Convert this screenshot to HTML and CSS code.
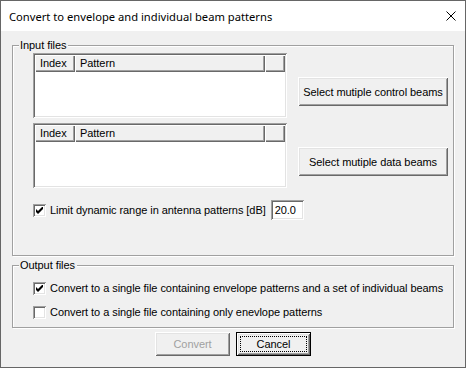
FILE: index.html
```html
<!DOCTYPE html>
<html lang="en">
<head>
    <meta charset="UTF-8" />
    <title>Convert to envelope and individual beam patterns</title>
    <link rel="stylesheet" href="styles.css">
</head>
<body>
    <div class="window">
        <div class="titlebar">
            <span class="title">Convert to envelope and individual beam patterns</span>
            <svg class="close" width="10" height="10" viewBox="0 0 10 10">
                <path d="M0.5 0.5 L9.5 9.5 M9.5 0.5 L0.5 9.5" stroke="#000" stroke-width="1" fill="none"/>
            </svg>
        </div>

        <div class="client">
            <div class="group group-input">
                <span class="group-label">Input files</span>

                <div class="list-row">
                    <div class="listview">
                        <div class="lv-header">
                            <span class="col col-index">Index</span>
                            <span class="col col-pattern">Pattern</span>
                            <span class="col col-fill"></span>
                        </div>
                    </div>
                    <button class="btn btn-select">Select mutiple control beams</button>
                </div>

                <div class="list-row second">
                    <div class="listview">
                        <div class="lv-header">
                            <span class="col col-index">Index</span>
                            <span class="col col-pattern">Pattern</span>
                            <span class="col col-fill"></span>
                        </div>
                    </div>
                    <button class="btn btn-select">Select mutiple data beams</button>
                </div>

                <div class="check-row range-row">
                    <span class="checkbox">
                        <svg width="7" height="7" viewBox="0 0 7 7"><path d="M0 2 L2 4 L7 -1 L7 2 L2 7 L0 5 Z" fill="#000"/></svg>
                    </span>
                    <span class="check-label">Limit dynamic range in antenna patterns [dB]</span>
                    <span class="textbox">20.0</span>
                </div>
            </div>

            <div class="group group-output">
                <span class="group-label">Output files</span>
                <div class="check-row">
                    <span class="checkbox">
                        <svg width="7" height="7" viewBox="0 0 7 7"><path d="M0 2 L2 4 L7 -1 L7 2 L2 7 L0 5 Z" fill="#000"/></svg>
                    </span>
                    <span class="check-label">Convert to a single file containing envelope patterns and a set of individual beams</span>
                </div>
                <div class="check-row">
                    <span class="checkbox"></span>
                    <span class="check-label">Convert to a single file containing only enevlope patterns</span>
                </div>
            </div>

            <div class="actions">
                <button class="btn btn-action" disabled>Convert</button>
                <button class="btn btn-action btn-default"><span class="focus">Cancel</span></button>
            </div>
        </div>
    </div>
</body>
</html>
```

FILE: styles.css
```css
:root {
    --face: #f0f0f0;
    --light: #e3e3e3;
    --shadow: #a0a0a0;
    --dark: #696969;
}
body {
    margin: 0;
    font-family: 'Liberation Sans', Arial, sans-serif;
    font-size: 11px;
    letter-spacing: -0.06px;
    color: #000;
}
.window {
    width: 466px;
    height: 368px;
    box-sizing: border-box;
    border: 1px solid #666;
    background: var(--face);
    display: flex;
    flex-direction: column;
}
.titlebar {
    height: 30px;
    background: #fff;
    display: flex;
    align-items: center;
    justify-content: space-between;
    padding: 0 9px 0 8px;
    flex-shrink: 0;
}
.title {
    font-family: 'Noto Sans', sans-serif;
    font-size: 11.2px;
    letter-spacing: 0;
    margin-top: 1px;
}
.close {
    display: block;
}
.client {
    padding: 14px 11px 0;
}
.group {
    position: relative;
    box-sizing: border-box;
    border: 1px solid var(--shadow);
    box-shadow: inset 1px 1px 0 #fff, 1px 1px 0 #fff;
}
.group-label {
    position: absolute;
    top: -7px;
    left: 6px;
    padding: 0 2px 0 1px;
    background: var(--face);
    line-height: 13px;
}
.group-input {
    height: 211px;
    padding: 7px 0 0 20px;
}
.group-output {
    height: 63px;
    margin-top: 9px;
    padding: 14px 0 0 20px;
}
.list-row {
    display: flex;
    align-items: flex-start;
}
.list-row.second {
    margin-top: 5px;
}
.listview {
    width: 254px;
    height: 65px;
    box-sizing: border-box;
    padding: 2px;
    background: #fff;
    box-shadow: inset 1px 1px 0 var(--shadow), inset -1px -1px 0 #fff,
                inset 2px 2px 0 var(--dark), inset -2px -2px 0 var(--light);
}
.lv-header {
    display: flex;
    height: 17px;
}
.col {
    box-sizing: border-box;
    height: 17px;
    line-height: 16px;
    padding-left: 5px;
    background: var(--face);
    box-shadow: inset 1px 1px 0 #fff, inset -1px -1px 0 var(--dark), inset -2px -2px 0 var(--shadow);
}
.col-index {
    width: 40px;
}
.col-pattern {
    width: 190px;
}
.col-fill {
    flex: 1;
}
.btn {
    box-sizing: border-box;
    border: none;
    margin: 0;
    padding: 0;
    background: var(--face);
    font: inherit;
    letter-spacing: inherit;
    color: #000;
    box-shadow: inset 1px 1px 0 #fff, inset -1px -1px 0 var(--dark),
                inset 2px 2px 0 var(--light), inset -2px -2px 0 var(--shadow);
}
.btn-select {
    width: 150px;
    height: 29px;
    margin: 24px 0 0 11px;
}
.check-row {
    display: flex;
    align-items: center;
    height: 16px;
}
.group-output .check-row + .check-row {
    margin-top: 8px;
}
.range-row {
    height: 20px;
    margin-top: 12px;
}
.checkbox {
    width: 13px;
    height: 13px;
    box-sizing: border-box;
    background: #fff;
    display: flex;
    align-items: center;
    justify-content: center;
    flex-shrink: 0;
    box-shadow: inset 1px 1px 0 var(--shadow), inset -1px -1px 0 #fff,
                inset 2px 2px 0 var(--dark), inset -2px -2px 0 var(--light);
}
.checkbox svg {
    display: block;
}
.check-label {
    margin-left: 4px;
    white-space: nowrap;
}
.textbox {
    width: 33px;
    height: 20px;
    box-sizing: border-box;
    margin-left: 5px;
    padding-left: 4px;
    line-height: 20px;
    background: #fff;
    box-shadow: inset 1px 1px 0 var(--shadow), inset -1px -1px 0 #fff,
                inset 2px 2px 0 var(--dark), inset -2px -2px 0 var(--light);
}
.actions {
    display: flex;
    justify-content: center;
    gap: 6px;
    margin-top: 4px;
}
.btn-action {
    width: 75px;
    height: 24px;
}
.btn-action:disabled {
    color: var(--shadow);
}
.btn-default {
    border: 1px solid #000;
    display: flex;
    align-items: center;
    justify-content: center;
}
.focus {
    display: block;
    box-sizing: border-box;
    width: 67px;
    height: 16px;
    line-height: 14px;
    border: 1px dotted #000;
}
```
